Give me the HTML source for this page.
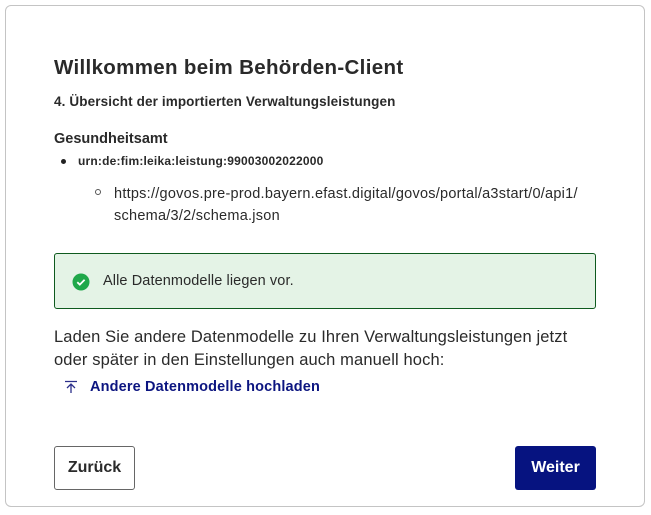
<!DOCTYPE html>
<html><head><meta charset="utf-8"><style>
*{margin:0;padding:0;box-sizing:border-box}
body{width:651px;height:515px;background:#fff;font-family:"Liberation Sans",sans-serif;color:#2a2a2a;position:relative;overflow:hidden}
.card{position:absolute;left:5px;top:5px;width:640px;height:502px;border:1px solid #c4c4c4;border-radius:6px}
.a{position:absolute;white-space:nowrap}
</style></head><body>
<div class="card"></div>
<div class="a" style="left:54px;top:56px;font-size:20.5px;font-weight:bold;letter-spacing:0.33px">Willkommen beim Behörden-Client</div>
<div class="a" style="left:54px;top:94px;font-size:13.5px;font-weight:bold;letter-spacing:0.12px">4. Übersicht der importierten Verwaltungsleistungen</div>
<div class="a" style="left:54px;top:131px;font-size:14.5px;font-weight:bold">Gesundheitsamt</div>
<div class="a" style="left:61px;top:159px;width:5px;height:5px;border-radius:50%;background:#222"></div>
<div class="a" style="left:78px;top:154px;font-size:12px;font-weight:bold;letter-spacing:0.2px">urn:de:fim:leika:leistung:99003002022000</div>
<div class="a" style="left:95px;top:189px;width:6px;height:6px;border-radius:50%;border:1px solid #555"></div>
<div class="a" style="left:114px;top:183px;font-size:14.5px;line-height:22px;letter-spacing:0.25px">https://govos.pre-prod.bayern.efast.digital/govos/portal/a3start/0/api1/<br>schema/3/2/schema.json</div>
<div class="a" style="left:54px;top:253px;width:542px;height:56px;background:#e4f3e6;border:1px solid #0e5a1e;border-radius:3px"></div>
<svg class="a" style="left:72px;top:273px" width="18" height="18" viewBox="0 0 18 18"><circle cx="9" cy="9" r="8.5" fill="#1fa84a"/><path d="M5.3 9.2l2.5 2.4 4.8-4.8" fill="none" stroke="#fff" stroke-width="1.8"/></svg>
<div class="a" style="left:103px;top:273px;font-size:14.5px;letter-spacing:0.1px">Alle Datenmodelle liegen vor.</div>
<div class="a" style="left:54px;top:326px;font-size:16.5px;line-height:23px;letter-spacing:0.12px">Laden Sie andere Datenmodelle zu Ihren Verwaltungsleistungen jetzt<br>oder später in den Einstellungen auch manuell hoch:</div>
<svg class="a" style="left:64px;top:380px" width="14" height="14" viewBox="0 0 14 14"><path d="M1 1.5h12M7 13V4.5M3 8l4-4 4 4" fill="none" stroke="#2b2f8a" stroke-width="1.3"/></svg>
<div class="a" style="left:90px;top:379px;font-size:14.5px;font-weight:bold;color:#0c1580;letter-spacing:0.15px">Andere Datenmodelle hochladen</div>
<div class="a" style="left:54px;top:446px;width:81px;height:44px;border:1px solid #666;border-radius:3px;font-size:16px;font-weight:bold;line-height:42px;text-align:center">Zurück</div>
<div class="a" style="left:515px;top:446px;width:81px;height:44px;background:#061380;border-radius:3px;color:#fff;font-size:16px;font-weight:bold;line-height:44px;text-align:center">Weiter</div>
</body></html>
